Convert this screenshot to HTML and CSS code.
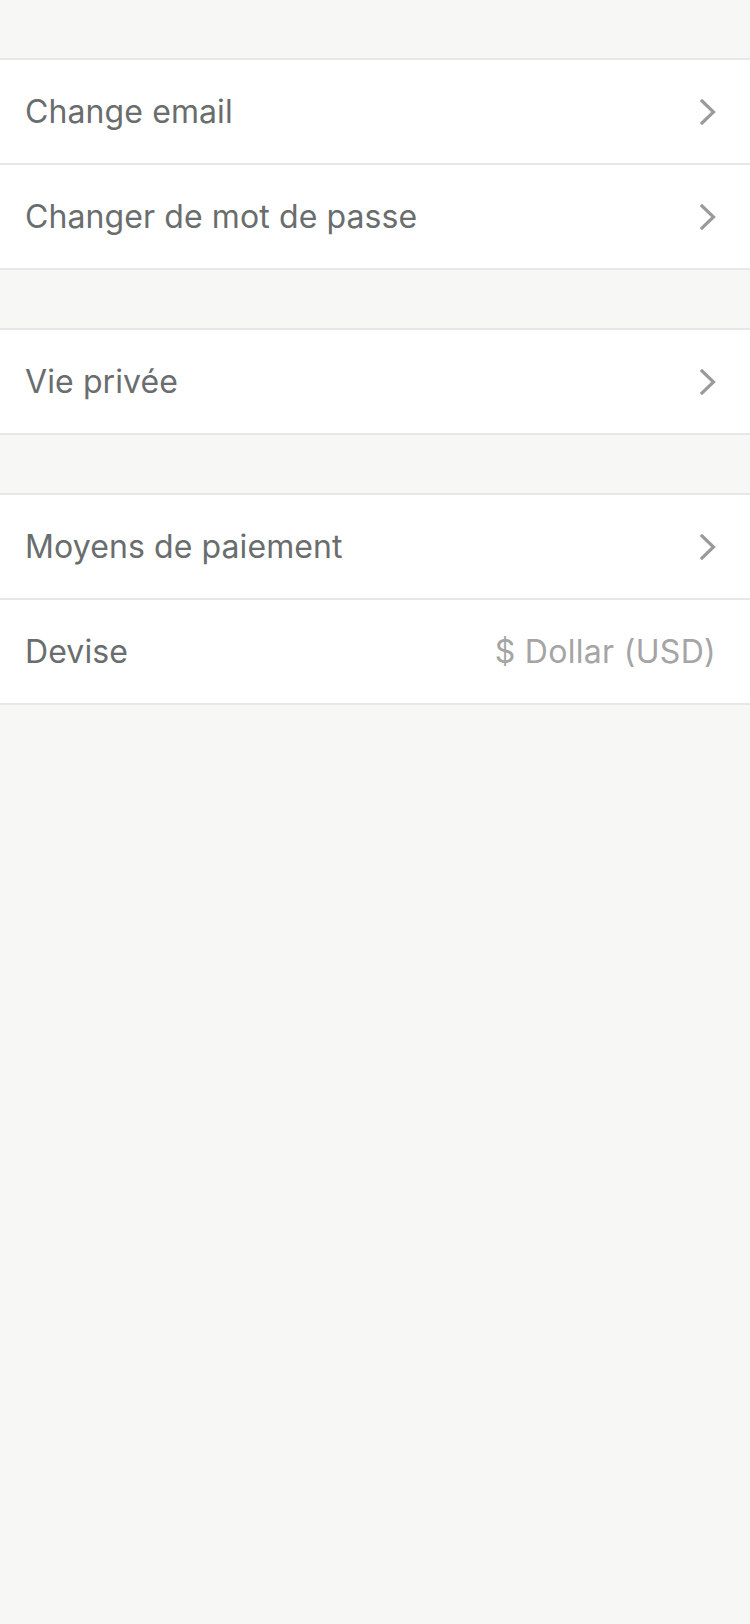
FILE: index.html
```html
<!DOCTYPE html>
<html lang="fr">
<head>
<meta charset="utf-8">
<title>Réglages</title>
<link rel="stylesheet" href="styles.css">
</head>
<body>
<div class="page">
  <div class="spacer"></div>
  <div class="group">
    <div class="row"><span class="label">Change email</span><svg class="chev" viewBox="0 0 16 26"><path d="M2 2 L13.5 13 L2 24"/></svg></div>
    <div class="row"><span class="label">Changer de mot de passe</span><svg class="chev" viewBox="0 0 16 26"><path d="M2 2 L13.5 13 L2 24"/></svg></div>
  </div>
  <div class="spacer"></div>
  <div class="group">
    <div class="row"><span class="label">Vie privée</span><svg class="chev" viewBox="0 0 16 26"><path d="M2 2 L13.5 13 L2 24"/></svg></div>
  </div>
  <div class="spacer"></div>
  <div class="group">
    <div class="row"><span class="label">Moyens de paiement</span><svg class="chev" viewBox="0 0 16 26"><path d="M2 2 L13.5 13 L2 24"/></svg></div>
    <div class="row"><span class="label">Devise</span><span class="value">$ Dollar (USD)</span></div>
  </div>
</div>
</body>
</html>
```
FILE: styles.css
```css
html, body {
  margin: 0;
  padding: 0;
  background: #f7f7f6;
}
body {
  font-family: Inter, "Noto Sans", sans-serif;
  width: 750px;
  min-height: 1624px;
}
.page {
  display: flex;
  flex-direction: column;
}
.spacer {
  height: 58px;
}
.group {
  background: #ffffff;
  border-top: 2px solid #e7e7e7;
  border-bottom: 2px solid #e7e7e7;
  display: flex;
  flex-direction: column;
}
.row {
  height: 103px;
  display: flex;
  align-items: center;
  justify-content: space-between;
  padding: 0 34px 0 25px;
}
.row + .row {
  border-top: 2px solid #e7e7e7;
}
.label {
  font-size: 32px;
  color: #6a6d6d;
  letter-spacing: 0.1px;
}
.value {
  font-size: 32px;
  color: #a5a5a5;
  letter-spacing: 0.3px;
}
.chev {
  width: 16px;
  height: 26px;
  fill: none;
  stroke: #999a9a;
  stroke-width: 3.2;
  stroke-linecap: square;
}
```
